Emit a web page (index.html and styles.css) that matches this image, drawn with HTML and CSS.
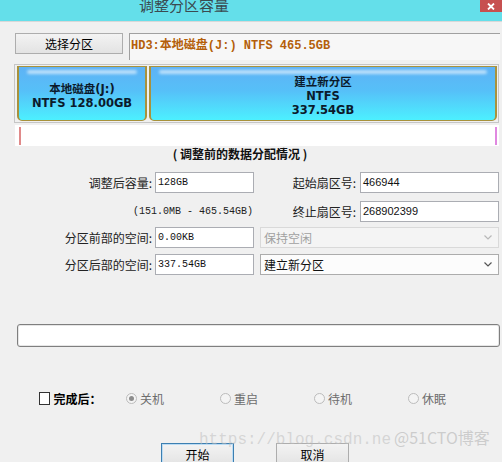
FILE: index.html
```html
<!DOCTYPE html>
<html>
<head>
<meta charset="utf-8">
<link rel="stylesheet" href="styles.css">
</head>
<body>
<div class="titlebar">
  <div class="title">调整分区容量</div>
  <div class="close">
    <svg width="8" height="7" viewBox="0 0 8 7"><path d="M1 0.5 L7 6.5 M7 0.5 L1 6.5" stroke="#fff" stroke-width="1.8"/></svg>
  </div>
</div>

<div class="toprow">
  <button class="btn sel">选择分区</button>
  <div class="info">HD3:本地磁盘(J:) NTFS 465.5GB</div>
</div>

<div class="diskmap">
  <div class="part p1"><span>本地磁盘(J:)</span><span>NTFS 128.00GB</span></div>
  <div class="part p2"><span>建立新分区</span><span>NTFS</span><span>337.54GB</span></div>
</div>
<div class="strip"><div class="strip-in"></div></div>

<div class="caption">( 调整前的数据分配情况 )</div>

<div class="form">
  <div class="row r1">
    <div class="lbl">调整后容量:</div>
    <div class="inp">128GB</div>
    <div class="lbl2">起始扇区号:</div>
    <div class="inp inp2">466944</div>
  </div>
  <div class="row r2">
    <div class="range">(151.0MB - 465.54GB)</div>
    <div class="lbl2">终止扇区号:</div>
    <div class="inp inp2">268902399</div>
  </div>
  <div class="row r3">
    <div class="lbl">分区前部的空间:</div>
    <div class="inp">0.00KB</div>
    <div class="select disabled"><span>保持空闲</span>
      <svg class="chev" width="8" height="5" viewBox="0 0 8 5"><polyline points="0.5,0.5 4,4 7.5,0.5" fill="none" stroke="currentColor" stroke-width="1.2"/></svg>
    </div>
  </div>
  <div class="row r4">
    <div class="lbl">分区后部的空间:</div>
    <div class="inp">337.54GB</div>
    <div class="select"><span>建立新分区</span>
      <svg class="chev" width="8" height="5" viewBox="0 0 8 5"><polyline points="0.5,0.5 4,4 7.5,0.5" fill="none" stroke="currentColor" stroke-width="1.2"/></svg>
    </div>
  </div>
</div>

<div class="progress"></div>

<div class="after">
  <div class="check"></div>
  <div class="after-lbl">完成后：</div>
  <div class="radios">
    <div class="radio-item"><span class="radio checked"></span><span class="rtext">关机</span></div>
    <div class="radio-item"><span class="radio"></span><span class="rtext">重启</span></div>
    <div class="radio-item"><span class="radio"></span><span class="rtext">待机</span></div>
    <div class="radio-item"><span class="radio"></span><span class="rtext">休眠</span></div>
  </div>
</div>

<div class="actions">
  <button class="btn act default">开始</button>
  <button class="btn act cancel">取消</button>
</div>

<div class="wm wm1">https://blog.csdn.ne</div>
<div class="wm wm2">@51CTO博客</div>
</body>
</html>
```

FILE: styles.css
```css
html, body {
  margin: 0;
  padding: 0;
}
body {
  width: 502px;
  height: 462px;
  overflow: hidden;
  background: #f0f0f0;
  font-family: "Noto Sans CJK SC", "DejaVu Sans", sans-serif;
  font-size: 12px;
  color: #000;
  position: relative;
}

.titlebar {
  height: 21px;
  background: #64dfea;
  border-bottom: 1px solid #d8d8d8;
  display: flex;
  align-items: flex-start;
}
.title {
  margin-left: 139px;
  font-size: 15px;
  line-height: 15px;
  margin-top: -3px;
  color: #3a4a50;
}
.close {
  margin-left: auto;
  width: 22px;
  height: 12px;
  background: #c75050;
  display: flex;
  align-items: center;
  justify-content: center;
}

.btn {
  font-family: "Noto Sans CJK SC", sans-serif;
  font-size: 12px;
  color: #000;
  background: linear-gradient(#f3f3f3, #e3e3e3);
  border: 1px solid #adadad;
  padding: 0;
  margin: 0;
  box-sizing: border-box;
}

.toprow {
  display: flex;
  align-items: flex-start;
  margin-top: 11px;
  padding-left: 15px;
  height: 27px;
}
.sel {
  width: 108px;
  height: 21px;
  line-height: 19px;
}
.info {
  margin-left: 6px;
  width: 371px;
  height: 27px;
  box-sizing: border-box;
  border-top: 1px solid #a0a0a0;
  border-left: 1px solid #a0a0a0;
  background: #f7f7f7;
  color: #b45f0a;
  font: bold 12px/25px "Liberation Mono", "Noto Sans CJK SC", monospace;
  padding-left: 1px;
  white-space: nowrap;
}

.diskmap {
  margin: 4px 0 0 14px;
  width: 485px;
  height: 59px;
  box-sizing: border-box;
  border: 1px solid #c6c6c6;
  padding: 1px 1px 1px 2px;
  display: flex;
  gap: 2px;
}
.part {
  position: relative;
  height: 55px;
  box-sizing: border-box;
  border: 1px solid #a8923c;
  border-left-width: 2px;
  border-right-width: 2px;
  border-radius: 0 0 5px 5px;
  background: linear-gradient(#5eb2f5 0%, #56c0f8 45%, #4cf0ff 100%);
  display: flex;
  flex-direction: column;
  align-items: center;
  justify-content: center;
  padding-top: 4px;
  font: bold 11.5px/14px "DejaVu Sans", "Noto Sans CJK SC", sans-serif;
  color: #0b1a2c;
}
.part::before {
  content: "";
  position: absolute;
  top: 3px;
  left: 8px;
  right: 8px;
  height: 4px;
  border-radius: 3px;
  background: rgba(255, 255, 255, 0.6);
  filter: blur(1.5px);
}
.p1 { width: 130px; }
.p2 { width: 348px; }

.strip {
  margin: 2px 0 0 15px;
  width: 484px;
  height: 21px;
  box-sizing: border-box;
  background: #fff;
  padding: 2px 2px 1px 4px;
  display: flex;
}
.strip-in {
  flex: 1;
  border-left: 2px solid #e08a8a;
  border-right: 2px solid #e088e0;
}

.caption {
  text-align: center;
  padding-right: 22px;
  font-weight: bold;
  line-height: 16px;
  height: 16px;
  color: #111;
}

.form {
  margin-top: 10px;
}
.row {
  display: flex;
  align-items: center;
  height: 21px;
}
.r2 { margin-top: 8px; }
.r3 { margin-top: 5px; }
.r4 { margin-top: 6px; }
.lbl {
  width: 155px;
  box-sizing: border-box;
  text-align: right;
  padding-right: 3px;
  color: #222;
}
.lbl2 {
  width: 106px;
  box-sizing: border-box;
  text-align: right;
  padding-right: 4px;
  color: #222;
}
.inp {
  width: 99px;
  height: 21px;
  box-sizing: border-box;
  border: 1px solid #abadb3;
  background: #fff;
  font: 10px/19px "Liberation Mono", monospace;
  padding-left: 2px;
  color: #111;
}
.inp2 {
  width: 139px;
  font-family: "Liberation Sans", sans-serif;
  font-size: 11px;
}
.range {
  width: 254px;
  box-sizing: border-box;
  text-align: right;
  padding-right: 1px;
  font: 10px "Liberation Mono", monospace;
  color: #222;
}
.select {
  margin-left: 6px;
  width: 239px;
  height: 21px;
  box-sizing: border-box;
  border: 1px solid #acacac;
  background: #fcfcfc;
  display: flex;
  align-items: center;
  padding: 0 6px 0 3px;
  color: #111;
}
.select span { flex: 1; }
.select .chev { color: #555; }
.select.disabled {
  border-color: #d9d9d9;
  background: #f4f4f4;
  color: #a0a0a0;
}
.select.disabled .chev { color: #b8b8b8; }

.progress {
  margin: 49px 0 0 17px;
  width: 483px;
  height: 23px;
  box-sizing: border-box;
  border: 1px solid #7f7f7f;
  border-radius: 3px;
  background: #fff;
  box-shadow: inset 0 0 0 1px #e6e6e6;
}

.after {
  margin-top: 45px;
  display: flex;
  align-items: center;
  height: 13px;
}
.check {
  margin-left: 39px;
  width: 13px;
  height: 13px;
  box-sizing: border-box;
  border: 1px solid #333;
  background: #fff;
}
.after-lbl {
  margin-left: 3px;
  font-weight: bold;
  width: 85px;
}
.radios {
  display: flex;
}
.radio-item {
  width: 94px;
  display: flex;
  align-items: center;
}
.radio {
  width: 11px;
  height: 11px;
  box-sizing: border-box;
  border: 1px solid #bcbcbc;
  border-radius: 50%;
  background: #f4f4f4;
  display: flex;
  align-items: center;
  justify-content: center;
}
.radio.checked::after {
  content: "";
  width: 5px;
  height: 5px;
  border-radius: 50%;
  background: #8c8c8c;
}
.rtext {
  margin-left: 3px;
  color: #6d6d6d;
}

.actions {
  margin-top: 38px;
  display: flex;
}
.act {
  width: 73px;
  height: 23px;
  line-height: 19px;
}
.default {
  margin-left: 161px;
  border-color: #3c7fb1;
  box-shadow: inset 0 0 0 1px #bcdcf4;
}
.cancel {
  margin-left: 42px;
}

.wm {
  position: absolute;
  white-space: nowrap;
  pointer-events: none;
}
.wm1 {
  left: 199px;
  top: 430px;
  font: 16px/20px "Liberation Mono", monospace;
  color: rgba(190, 190, 190, 0.55);
}
.wm2 {
  left: 394px;
  top: 427px;
  font: 16px/20px "Noto Sans CJK SC", sans-serif;
  color: rgba(180, 180, 180, 0.6);
}
```
